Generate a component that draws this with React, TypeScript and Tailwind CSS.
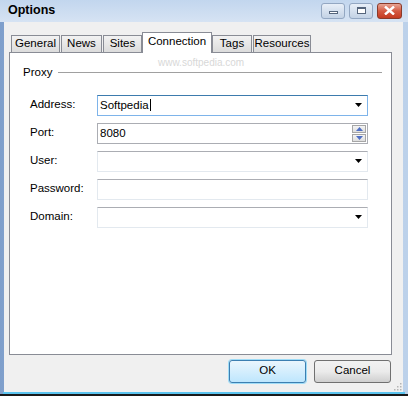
import React from "react";

const font = { fontFamily: '"Liberation Sans", Arial, sans-serif' };

function Arrow() {
  return (
    <svg width="7" height="4" viewBox="0 0 7 4" className="block">
      <path d="M0 0h7L3.5 4z" fill="#000" />
    </svg>
  );
}

function Field({
  label,
  value,
  combo,
  spin,
  focused,
}: {
  label: string;
  value?: string;
  combo?: boolean;
  spin?: boolean;
  focused?: boolean;
}) {
  return (
    <div className="flex h-[28px] items-start">
      <div className="w-[67px] pt-[1px] text-[11.5px] text-black">{label}</div>
      <div
        className={
          "flex h-[21px] w-[271px] items-center border pl-[2px] text-[11.5px] " +
          (focused
            ? "border-[#7eb4ea] border-t-[#3d7bad] bg-white"
            : spin
            ? "border-[#abadb3] bg-white"
            : "border-[#e3e9ef] border-t-[#abadb3] bg-white")
        }
      >
        <span className="flex-1">
          {value}
          {focused ? <span className="ml-px inline-block h-[12px] w-px translate-y-[2px] bg-black" /> : null}
        </span>
        {combo ? (
          <div className="flex w-[16px] justify-center pr-[2px]">
            <Arrow />
          </div>
        ) : null}
        {spin ? (
          <div className="mr-px flex h-[17px] w-[14px] flex-col">
            <div className="flex h-[8px] items-center justify-center border border-[#a6a6a6] bg-gradient-to-b from-[#f4f4f4] to-[#dedede]">
              <svg width="7" height="4" viewBox="0 0 7 4">
                <path d="M0 4h7L3.5 0z" fill="#4f6fc3" />
              </svg>
            </div>
            <div className="mt-px flex h-[8px] items-center justify-center border border-[#a6a6a6] bg-gradient-to-b from-[#f4f4f4] to-[#dedede]">
              <svg width="7" height="4" viewBox="0 0 7 4">
                <path d="M0 0h7L3.5 4z" fill="#4f6fc3" />
              </svg>
            </div>
          </div>
        ) : null}
      </div>
    </div>
  );
}

function Tab({ label, active, w }: { label: string; active?: boolean; w: string }) {
  if (active) {
    return (
      <div
        className={
          "relative z-10 -mb-px flex h-[21px] items-center justify-center border border-b-0 border-[#898c95] bg-white pb-[2px] text-[11.5px] " +
          w
        }
      >
        {label}
      </div>
    );
  }
  return (
    <div
      className={
        "flex h-[17px] items-center justify-center border border-b-0 border-[#898c95] bg-gradient-to-b from-[#f2f2f2] to-[#dcdcdc] pt-px text-[11.5px] " +
        w
      }
    >
      {label}
    </div>
  );
}

export default function App() {
  return (
    <div
      className="relative flex h-[396px] w-[408px] flex-col overflow-hidden bg-gradient-to-r from-[#7f9fcb] via-[#c6d8ee] to-[#bcd1ea]"
      style={font}
    >
      <div className="flex h-[24px] items-center bg-gradient-to-b from-[#c2d6ee] to-[#d6e3f3] pl-[8px] pr-[6px]">
        <span className="text-[12.5px] font-bold text-black">Options</span>
        <div className="ml-auto flex gap-[4px]">
          <div className="flex h-[16px] w-[24px] items-center justify-center rounded-[3px] border border-[#93a7c2] bg-gradient-to-b from-[#e8eff8] to-[#c3d2e5]">
            <div className="mt-[4px] h-[3px] w-[9px] border border-[#55657c] bg-white" />
          </div>
          <div className="flex h-[16px] w-[24px] items-center justify-center rounded-[3px] border border-[#93a7c2] bg-gradient-to-b from-[#e8eff8] to-[#c3d2e5]">
            <div className="h-[7px] w-[9px] border border-[#55657c] border-t-2 bg-white" />
          </div>
          <div className="flex h-[16px] w-[25px] items-center justify-center rounded-[3px] border border-[#8a3a2a] bg-gradient-to-b from-[#e6a494] via-[#d45a42] to-[#c53a20]">
            <svg width="11" height="9" viewBox="0 0 11 9">
              <path d="M1 0.5L10 8.5M10 0.5L1 8.5" stroke="#fff" strokeWidth="2.4" />
            </svg>
          </div>
        </div>
      </div>

      <div className="ml-[4px] mr-[5px] flex flex-1 flex-col bg-[#f0f0f0]">
        <div className="ml-[7px] mt-[10px] flex items-end">
          <Tab label="General" w="w-[49px]" />
          <div className="w-[1px]" />
          <Tab label="News" w="w-[41px]" />
          <div className="w-[1px]" />
          <Tab label="Sites" w="w-[39px]" />
          <Tab label="Connection" active w="w-[70px]" />
          <Tab label="Tags" w="w-[40px]" />
          <div className="w-[1px]" />
          <Tab label="Resources" w="w-[58px]" />
        </div>
        <div className="ml-[5px] h-[303px] w-[383px] border border-[#898c95] bg-white">
          <div className="relative ml-[13px] mr-[9px] mt-[11px] flex items-center">
            <span className="text-[11.5px]">Proxy</span>
            <div className="ml-[6px] h-px flex-1 bg-[#a0a0a0]" />
            <span className="pointer-events-none absolute left-[135px] top-[-9px] text-[10px] text-[#d8d8d8]">
              www.softpedia.com
            </span>
          </div>
          <div className="ml-[20px] mt-[14px] flex flex-col">
            <Field label="Address:" value="Softpedia" combo focused />
            <Field label="Port:" value="8080" spin />
            <Field label="User:" combo />
            <Field label="Password:" />
            <Field label="Domain:" combo />
          </div>
        </div>
        <div className="mr-[12px] mt-[5px] flex justify-end gap-[8px]">
          <div className="flex h-[23px] w-[77px] items-center justify-center rounded-[3px] border border-[#3c7fb1] bg-gradient-to-b from-[#eaf6fd] to-[#bee6fd] text-[11.5px] shadow-[0_0_0_1px_#9fdcf7]">
            OK
          </div>
          <div className="flex h-[23px] w-[77px] items-center justify-center rounded-[3px] border border-[#707070] bg-gradient-to-b from-[#f2f2f2] via-[#ebebeb] to-[#cfcfcf] text-[11.5px]">
            Cancel
          </div>
        </div>
        <div className="mt-auto flex justify-end pb-[1px] pr-[1px]">
          <svg width="8" height="8" viewBox="0 0 8 8">
            <g fill="#b5b5b5">
              <rect x="6" y="0" width="1.5" height="1.5" />
              <rect x="3" y="3" width="1.5" height="1.5" />
              <rect x="6" y="3" width="1.5" height="1.5" />
              <rect x="0" y="6" width="1.5" height="1.5" />
              <rect x="3" y="6" width="1.5" height="1.5" />
              <rect x="6" y="6" width="1.5" height="1.5" />
            </g>
          </svg>
        </div>
      </div>
      <div className="mx-[3px] h-[3px] bg-[#5ac3ee]" />
      <div className="h-[2px] bg-[#1a1a1a]" />
    </div>
  );
}
